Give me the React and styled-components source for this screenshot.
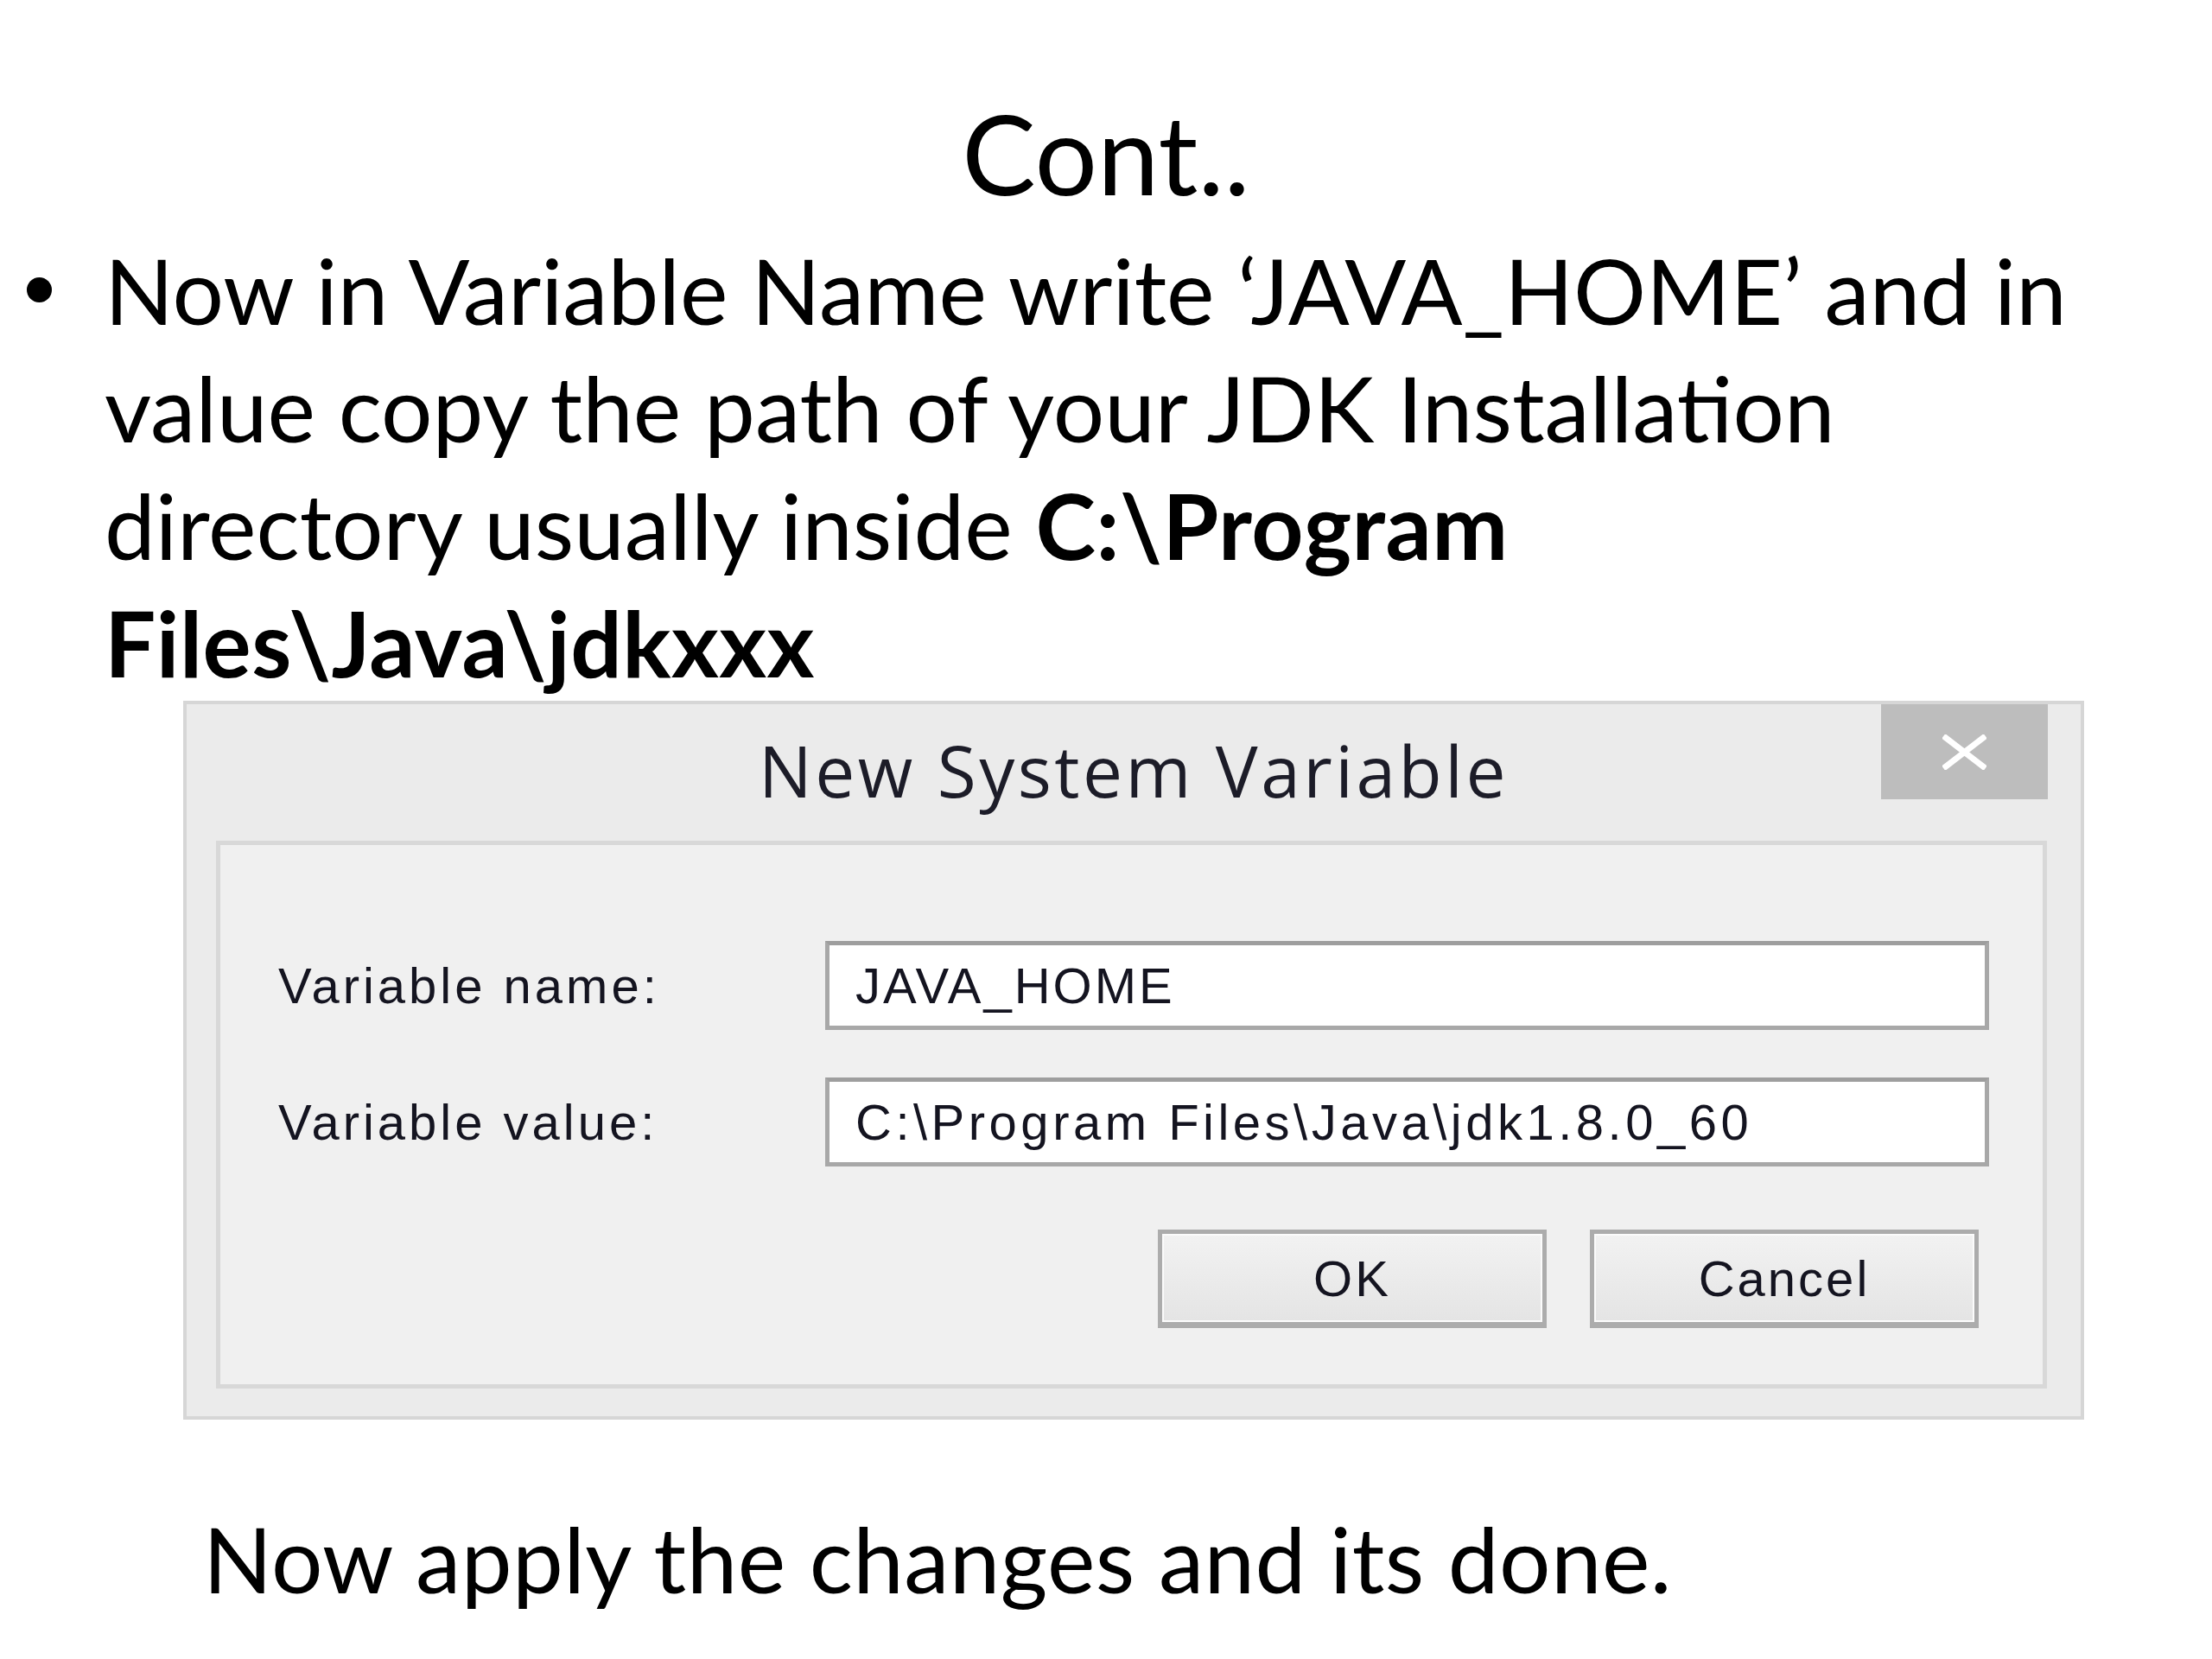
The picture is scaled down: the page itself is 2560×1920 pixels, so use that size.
import React from 'react';
import styled, { createGlobalStyle } from 'styled-components';

const GlobalStyle = createGlobalStyle`
    html, body {
        margin: 0;
        padding: 0;
        background: #ffffff;
    }
    body {
        font-family: Lato, "Open Sans", sans-serif;
        color: #000000;
    }
`;

const Slide = styled.div`
    width: 2560px;
    height: 1920px;
    box-sizing: border-box;
    padding-top: 101px;
    overflow: hidden;
`;

const Title = styled.h1`
    margin: 0;
    font-family: Lato, sans-serif;
    font-weight: 400;
    font-size: 128px;
    line-height: 151px;
    text-align: center;
`;

const Bullets = styled.ul`
    list-style: none;
    margin: 15px 0 0;
    padding: 0;
`;

const BulletItem = styled.li`
    display: flex;
    font-size: 105px;
    line-height: 136px;
`;

const Marker = styled.span`
    flex: 0 0 121px;
    display: flex;
    &::before {
        content: "";
        width: 29px;
        height: 29px;
        border-radius: 50%;
        background: #000;
        margin: 54px 0 0 31px;
    }
`;

const Strong = styled.b`
    font-weight: 700;
    letter-spacing: 0.5px;
`;

const Dialog = styled.div`
    margin-left: 212px;
    width: 2200px;
    height: 832px;
    box-sizing: border-box;
    border: 4px solid #d6d6d6;
    background: #ebebeb;
    display: flex;
    flex-direction: column;
    font-family: "Liberation Sans", Arial, sans-serif;
    color: #141420;
`;

const TitleBar = styled.div`
    height: 158px;
    display: grid;
    grid-template-columns: 1fr auto 1fr;
    align-items: start;
`;

const DialogTitle = styled.div`
    grid-column: 2;
    font-family: "Open Sans", sans-serif;
    font-size: 82px;
    line-height: 1;
    letter-spacing: 3.5px;
    padding-top: 35px;
    color: #1c1c28;
`;

const CloseButton = styled.div`
    grid-column: 3;
    justify-self: end;
    margin-right: 38px;
    width: 193px;
    height: 110px;
    background: #bdbdbd;
    display: flex;
    align-items: center;
    justify-content: center;
`;

const GroupBox = styled.div`
    margin: 0 39px 0 34px;
    height: 634px;
    box-sizing: border-box;
    border: 5px solid #d8d8d8;
    background: #f0f0f0;
    padding: 111px 62px 0 67px;
    display: flex;
    flex-direction: column;
    gap: 55px;
`;

const FieldRow = styled.div`
    display: flex;
    align-items: center;
`;

const Label = styled.div`
    flex: 0 0 633px;
    font-size: 58px;
    letter-spacing: 4px;
`;

const Field = styled.div`
    flex: 1;
    height: 103px;
    box-sizing: border-box;
    border: 5px solid #a8a8a8;
    border-top-color: #9e9e9e;
    background: #ffffff;
    padding-left: 30px;
    display: flex;
    align-items: center;
    font-size: 58px;
    letter-spacing: ${props => props.$spacing || 3}px;
    white-space: nowrap;
`;

const ButtonRow = styled.div`
    display: flex;
    justify-content: flex-end;
    gap: 50px;
    margin: 18px 12px 0 0;
`;

const Button = styled.div`
    width: 450px;
    height: 114px;
    box-sizing: border-box;
    border: 5px solid #acacac;
    border-bottom-width: 7px;
    box-shadow: inset 0 0 0 2px #fbfbfb;
    background: linear-gradient(#f2f2f2, #e4e4e4);
    display: flex;
    align-items: center;
    justify-content: center;
    font-size: 58px;
    letter-spacing: 3px;
`;

const Closing = styled.p`
    margin: 92px 0 0 235px;
    font-size: 105px;
    line-height: 136px;
    letter-spacing: 0.4px;
`;

const App = () => {
    return (
        <>
            <GlobalStyle />
            <Slide>
                <Title>Cont..</Title>
                <Bullets>
                    <BulletItem>
                        <Marker />
                        <span>
                            Now in Variable Name write ‘JAVA_HOME’ and in<br />
                            value copy the path of your JDK Installation<br />
                            directory usually inside <Strong>{'C:\\Program'}</Strong><br />
                            <Strong>{'Files\\Java\\jdkxxx'}</Strong>
                        </span>
                    </BulletItem>
                </Bullets>
                <Dialog>
                    <TitleBar>
                        <DialogTitle>New System Variable</DialogTitle>
                        <CloseButton>
                            <svg width="51" height="41" viewBox="0 0 51 41">
                                <path d="M4 4 L47 37 M47 4 L4 37" stroke="#ffffff" strokeWidth="7" strokeLinecap="square" fill="none" />
                            </svg>
                        </CloseButton>
                    </TitleBar>
                    <GroupBox>
                        <FieldRow>
                            <Label>Variable name:</Label>
                            <Field $spacing={3}>JAVA_HOME</Field>
                        </FieldRow>
                        <FieldRow>
                            <Label>Variable value:</Label>
                            <Field $spacing={4.5}>{'C:\\Program Files\\Java\\jdk1.8.0_60'}</Field>
                        </FieldRow>
                        <ButtonRow>
                            <Button>OK</Button>
                            <Button>Cancel</Button>
                        </ButtonRow>
                    </GroupBox>
                </Dialog>
                <Closing>Now apply the changes and its done.</Closing>
            </Slide>
        </>
    );
};

export default App;
